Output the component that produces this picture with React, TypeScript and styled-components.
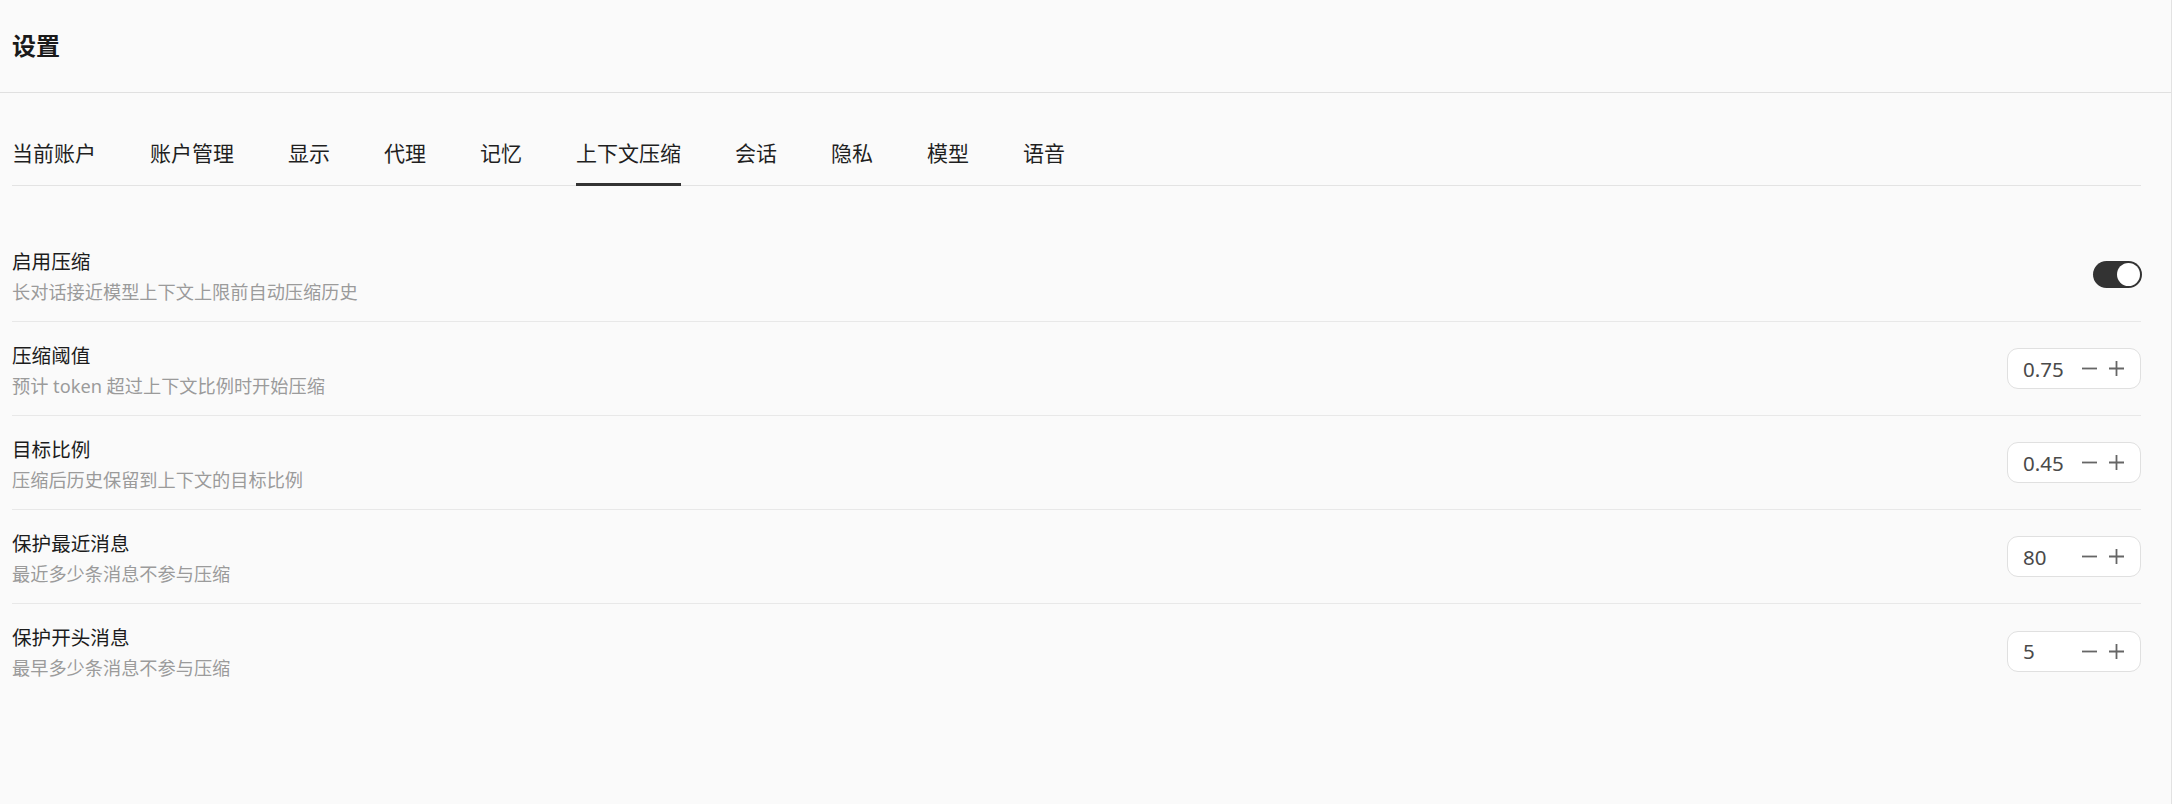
import React, { useState } from 'react';
import styled, { createGlobalStyle } from 'styled-components';

const GlobalStyle = createGlobalStyle`
  html, body {
    margin: 0;
    padding: 0;
    background: #fafafa;
  }
  body {
    font-family: "Noto Sans", "Noto Sans CJK SC", sans-serif;
    color: #1f1f1f;
  }
`;

const Page = styled.div`
  width: 2172px;
  height: 804px;
  box-sizing: border-box;
  background: #fafafa;
  border-right: 1px solid #e2e2e2;
  display: flex;
  flex-direction: column;
`;

const Header = styled.header`
  height: 93px;
  box-sizing: border-box;
  border-bottom: 1px solid #e0e0e0;
  padding-left: 12px;
  display: flex;
  align-items: center;
`;

const Title = styled.h1`
  margin: 0;
  font-size: 24px;
  font-weight: 700;
  line-height: 30px;
  color: #1a1a1a;
`;

const Body = styled.main`
  padding: 0 30px 0 12px;
  display: flex;
  flex-direction: column;
`;

const TabBar = styled.nav`
  margin-top: 45px;
  display: flex;
  gap: 54px;
  border-bottom: 1px solid #e3e3e3;
`;

const Tab = styled.button<{ $active?: boolean }>`
  appearance: none;
  background: none;
  border: 0;
  border-bottom: 3px solid ${(p) => (p.$active ? '#333333' : 'transparent')};
  margin: 0 0 -1px;
  padding: 0 0 15px;
  font-family: inherit;
  font-size: 21px;
  line-height: 30px;
  color: #1f1f1f;
  cursor: pointer;
`;

const List = styled.section`
  padding-top: 42px;
  display: flex;
  flex-direction: column;
`;

const Row = styled.div`
  height: 94px;
  box-sizing: border-box;
  display: flex;
  align-items: center;
  justify-content: space-between;
  border-bottom: 1px solid #e8e8e8;
  &:last-child {
    border-bottom: 0;
  }
`;

const Texts = styled.div`
  display: flex;
  flex-direction: column;
  gap: 3px;
  padding-top: 3px;
`;

const Label = styled.div`
  font-size: 19.6px;
  line-height: 28px;
  color: #1c1c1c;
`;

const Hint = styled.div`
  font-size: 18.2px;
  line-height: 26px;
  color: #9b9b9b;
`;

const Switch = styled.button<{ $on: boolean }>`
  appearance: none;
  width: 49px;
  height: 27px;
  border: 0;
  border-radius: 14px;
  padding: 2px;
  background: ${(p) => (p.$on ? '#333333' : '#cfcfcf')};
  display: flex;
  justify-content: ${(p) => (p.$on ? 'flex-end' : 'flex-start')};
  align-items: center;
  cursor: pointer;
  margin-right: -1px;
`;

const Knob = styled.span`
  width: 23px;
  height: 23px;
  border-radius: 50%;
  background: #ffffff;
`;

const Stepper = styled.div`
  width: 134px;
  height: 41px;
  box-sizing: border-box;
  border: 1px solid #e0e0e0;
  border-radius: 11px;
  background: #ffffff;
  display: flex;
  align-items: center;
  padding: 0 14px 0 15px;
`;

const Value = styled.span`
  width: 58px;
  font-size: 20.5px;
  line-height: 26px;
  color: #4a4a4a;
`;

const StepButton = styled.button`
  appearance: none;
  border: 0;
  background: none;
  padding: 0;
  width: 17px;
  height: 17px;
  display: flex;
  align-items: center;
  justify-content: center;
  color: #666666;
  cursor: pointer;
  & + & {
    margin-left: 10px;
  }
`;

const MinusIcon = () => (
  <svg width="17" height="17" viewBox="0 0 17 17">
    <path d="M1 8.5h15" stroke="currentColor" strokeWidth="1.8" />
  </svg>
);

const PlusIcon = () => (
  <svg width="17" height="17" viewBox="0 0 17 17">
    <path d="M1 8.5h15M8.5 1v15" stroke="currentColor" strokeWidth="1.8" />
  </svg>
);

const tabs = ['当前账户', '账户管理', '显示', '代理', '记忆', '上下文压缩', '会话', '隐私', '模型', '语音'];

type Item = { label: string; hint: string; value?: string };

const items: Item[] = [
  { label: '压缩阈值', hint: '预计 token 超过上下文比例时开始压缩', value: '0.75' },
  { label: '目标比例', hint: '压缩后历史保留到上下文的目标比例', value: '0.45' },
  { label: '保护最近消息', hint: '最近多少条消息不参与压缩', value: '80' },
  { label: '保护开头消息', hint: '最早多少条消息不参与压缩', value: '5' },
];

export default function App() {
  const [active, setActive] = useState('上下文压缩');
  const [enabled, setEnabled] = useState(true);

  return (
    <Page>
      <GlobalStyle />
      <Header>
        <Title>设置</Title>
      </Header>
      <Body>
        <TabBar>
          {tabs.map((t) => (
            <Tab key={t} $active={t === active} onClick={() => setActive(t)}>
              {t}
            </Tab>
          ))}
        </TabBar>
        <List>
          <Row>
            <Texts>
              <Label>启用压缩</Label>
              <Hint>长对话接近模型上下文上限前自动压缩历史</Hint>
            </Texts>
            <Switch $on={enabled} onClick={() => setEnabled(!enabled)}>
              <Knob />
            </Switch>
          </Row>
          {items.map((it) => (
            <Row key={it.label}>
              <Texts>
                <Label>{it.label}</Label>
                <Hint>{it.hint}</Hint>
              </Texts>
              <Stepper>
                <Value>{it.value}</Value>
                <StepButton aria-label="减少">
                  <MinusIcon />
                </StepButton>
                <StepButton aria-label="增加">
                  <PlusIcon />
                </StepButton>
              </Stepper>
            </Row>
          ))}
        </List>
      </Body>
    </Page>
  );
}
